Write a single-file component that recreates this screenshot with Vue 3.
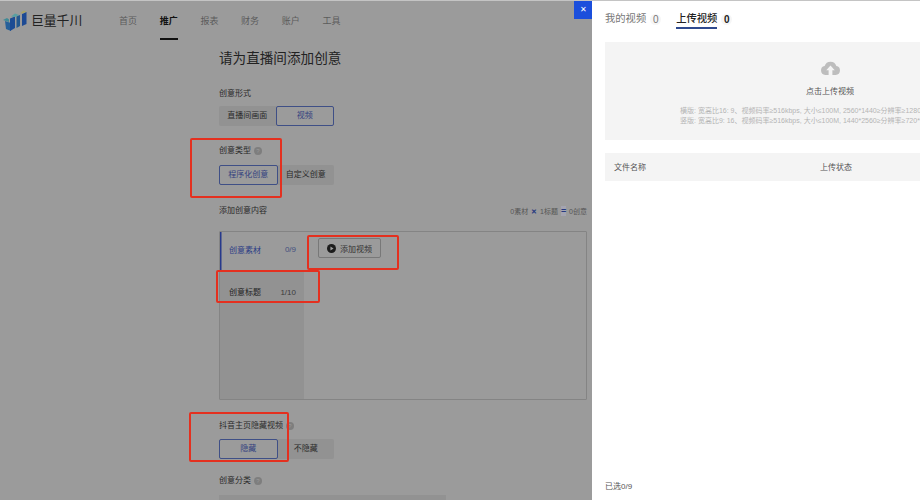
<template>
  <div class="page">
    <!-- dimmed page behind the drawer -->
    <div class="left">
      <header class="topbar">
        <div class="logo">
          <svg width="24" height="22" viewBox="0 0 24 22">
            <path d="M0 10 L4 8 L6 9.500 L6 12 Z" fill="#3f8a96" />
            <path d="M2 11 L8 13 L8 21 L3 19 Z" fill="#26609a" />
            <path d="M7 8.500 L12 6.500 L12 18 L7 21 Z" fill="#1d4c94" />
            <path d="M8 6.500 L12 3.500 L16 5 L12 7 Z" fill="#58a0a2" />
            <path d="M13.500 6.500 L17 5 L17 16 L13.500 18 Z" fill="#24588f" />
            <path d="M19 4 L23.500 2 L23.500 14 L19 16 Z" fill="#1d4a94" />
            <path d="M17.500 3 L20.500 0.500 L23.500 1.500 L20 3.500 Z" fill="#a8a466" />
          </svg>
          <span class="logo-name">巨量千川</span>
        </div>
        <nav class="nav">
          <a v-for="n in navs" :key="n" :class="['nav-item', { active: n === '推广' }]">{{ n }}</a>
        </nav>
      </header>

      <main class="form">
        <h2 class="title">请为直播间添加创意</h2>

        <div class="label first">创意形式</div>
        <div class="seg close-up">
          <span class="opt">直播间画面</span>
          <span class="opt on">视频</span>
        </div>

        <div class="label gap-a">创意类型 <i class="help">?</i></div>
        <div class="seg roomy">
          <span class="opt on">程序化创意</span>
          <span class="opt">自定义创意</span>
        </div>

        <div class="content-head">
          <span class="label">添加创意内容</span>
          <span class="formula">0素材 <b>✕</b> 1标题 <b class="eq">=</b> 0创意</span>
        </div>

        <div class="content-box">
          <div class="side">
            <div class="side-row current">
              <span>创意素材</span><em>0/9</em>
            </div>
            <div class="side-row second">
              <span>创意标题</span><em>1/10</em>
            </div>
          </div>
          <div class="main-col">
            <button class="add-btn">
              <svg width="9" height="9" viewBox="0 0 10 10">
                <circle cx="5" cy="5" r="5" fill="#1c1c1c" />
                <path d="M3.800 2.800 L7.300 5 L3.800 7.200 Z" fill="#a0a0a0" />
              </svg>
              添加视频
            </button>
          </div>
        </div>

        <div class="label gap-b">抖音主页隐藏视频 <i class="help">?</i></div>
        <div class="seg">
          <span class="opt on">隐藏</span>
          <span class="opt">不隐藏</span>
        </div>

        <div class="label gap-c">创意分类 <i class="help">?</i></div>
        <div class="cat-input"></div>
      </main>

      <!-- red annotation frames -->
      <div class="mark m1"></div>
      <div class="mark m2"></div>
      <div class="mark m3"></div>
      <div class="mark m4"></div>

      <button class="close">✕</button>
    </div>

    <aside class="drawer">
      <div class="tabs">
        <span class="tab">我的视频</span>
        <span class="count">0</span>
        <span class="tab current">上传视频</span>
        <span class="count strong">0</span>
      </div>

      <div class="upload">
        <svg width="21" height="16" viewBox="0 0 21 17">
          <path d="M5 17 A4.800 4.800 0 0 1 4.300 7.500 A6.500 6.500 0 0 1 16.700 7.500 A4.800 4.800 0 0 1 16 17 L12.500 17 L12.500 12 L15 12 L10.500 7 L6 12 L8.500 12 L8.500 17 Z" fill="#bdbdbd" />
        </svg>
        <div class="upload-text">点击上传视频</div>
        <div class="upload-hint">
          <p>横版: 宽高比16: 9、视频码率≥516kbps, 大小≤100M, 2560*1440≥分辨率≥1280*720</p>
          <p>竖版: 宽高比9: 16、视频码率≥516kbps, 大小≤100M, 1440*2560≥分辨率≥720*1280</p>
        </div>
      </div>

      <div class="file-head">
        <span>文件名称</span>
        <span>上传状态</span>
      </div>

      <div class="spacer"></div>
      <div class="foot">已选0/9</div>
    </aside>
  </div>
</template>

<script setup>
const navs = ['首页', '推广', '报表', '财务', '账户', '工具']
</script>

<style>
html, body { margin: 0; padding: 0; background: #fff; }
</style>

<style scoped>
.page { width: 920px; height: 500px; display: flex; overflow: hidden; font-family: "Liberation Sans", "Noto Sans CJK SC", sans-serif; border-top: 1px solid #c4c4c4; box-sizing: border-box; }

.left { position: relative; flex: 0 0 592px; height: 100%; background: #9b9b9b; overflow: hidden; color: #1e1e1e; }

.topbar { display: flex; align-items: flex-start; height: 39px; }
.logo { display: flex; align-items: center; gap: 4px; margin-left: 3px; margin-top: 9px; width: 116px; }
.logo-name { font-size: 12.800px; line-height: 22px; color: #222; }
.nav { display: flex; gap: 22.700px; margin-top: 13px; }
.nav-item { position: relative; font-size: 9px; line-height: 15px; color: #5c5c5c; }
.nav-item.active { color: #111; font-weight: 700; }
.nav-item.active::after { content: ''; position: absolute; left: 0; right: 0; top: 24px; height: 1.500px; background: #111; }

.form { padding-left: 219px; width: 368px; }
.title { margin: 8px 0 0; font-size: 13.600px; line-height: 22px; font-weight: 400; color: #222; }
.label { font-size: 8px; line-height: 12px; color: #2a2a2a; display: flex; align-items: center; gap: 3px; }
.label.first { margin-top: 18px; }
.label.gap-a { margin-top: 19px; }
.label.gap-b { margin-top: 20px; }
.label.gap-c { margin-top: 16px; }
.help { width: 8px; height: 8px; border-radius: 50%; background: #7e7e7e; color: #9b9b9b; font-size: 6px; line-height: 8px; text-align: center; font-style: normal; }

.seg { display: flex; margin-top: 7px; width: 115px; height: 20px; background: #929292; border-radius: 2px; }
.seg.close-up { margin-top: 6px; }
.seg.roomy { margin-top: 8px; }
.opt { flex: 1; box-sizing: border-box; font-size: 8px; line-height: 20px; text-align: center; color: #2a2a2a; }
.opt.on { background: #9b9b9b; border: 1px solid #3f4f86; border-radius: 2px; color: #33427f; line-height: 18px; }

.content-head { display: flex; justify-content: space-between; align-items: center; margin-top: 20px; }
.formula { font-size: 7px; color: #555; }
.formula b { margin: 0 1px; color: #263a80; font-weight: 700; }
.formula .eq { font-size: 9px; line-height: 8px; background: #a4a4b0; }

.content-box { display: flex; height: 169px; margin-top: 14px; box-sizing: border-box; border: 1px solid #848484; border-radius: 1px; }
.side { width: 84px; background: #929292; }
.side-row { display: flex; justify-content: space-between; align-items: center; padding: 0 8px 0 9px; font-size: 8px; color: #222; }
.side-row em { font-style: normal; color: #3c3c3c; }
.side-row.current { height: 38px; box-sizing: border-box; padding-bottom: 3px; background: #9b9b9b; color: #2d3e86; box-shadow: inset 1.500px 0 0 #27398c; }
.side-row.current em { color: #44507f; }
.side-row.second { height: 28px; align-items: flex-end; box-sizing: border-box; padding-bottom: 1px; }
.main-col { flex: 1; padding: 6px 0 0 14px; }
.add-btn { display: flex; align-items: center; justify-content: center; gap: 4px; width: 63px; height: 20px; padding: 0; background: #9b9b9b; border: 1px solid #787878; border-radius: 2px; font-family: inherit; font-size: 8px; color: #333; }

.cat-input { margin-top: 8px; width: 227px; height: 20px; background: #929292; }

.mark { position: absolute; box-sizing: border-box; border: 2px solid #e4301f; border-radius: 2px; }
.m1 { left: 190px; top: 137px; width: 92px; height: 60px; }
.m2 { left: 307px; top: 234px; width: 92px; height: 35px; }
.m3 { left: 216px; top: 269px; width: 104px; height: 33px; }
.m4 { left: 189px; top: 411px; width: 100px; height: 50px; }

.close { position: absolute; right: 0; top: 0; width: 18px; height: 18px; padding: 0; border: none; background: #1b4fdc; color: #fff; font-size: 8px; line-height: 18px; text-align: center; }

.drawer { flex: 0 0 478px; height: 100%; box-sizing: border-box; padding: 0 0 0 13px; background: #fff; display: flex; flex-direction: column; color: #333; }

.tabs { display: flex; align-items: center; height: 36px; }
.tab { font-size: 10.300px; line-height: 14px; color: #777; }
.tab.current { position: relative; font-weight: 500; color: #222; }
.tab.current::after { content: ''; position: absolute; left: 0; right: 0; top: 15px; height: 1.500px; background: #2f4a8e; }
.count { margin: 0 15px 0 4px; width: 11px; height: 11px; font-size: 10px; line-height: 11px; text-align: center; color: #777; background: #f6f6f6; border-radius: 50%; }
.count.strong { font-weight: 700; color: #222; }

.upload { margin-top: 5px; width: 450px; height: 98px; box-sizing: border-box; padding-top: 17px; background: #f4f4f4; display: flex; flex-direction: column; align-items: center; }
.upload-text { margin-top: 11px; font-size: 8px; line-height: 12px; color: #555; }
.upload-hint { margin-top: 8px; width: 300px; font-size: 7px; line-height: 10px; color: #b4b4b4; white-space: nowrap; }
.upload-hint p { margin: 0; }

.file-head { display: grid; grid-template-columns: 206px 1fr; margin-top: 13px; width: 450px; height: 28px; box-sizing: border-box; padding-left: 9px; background: #f4f4f4; font-size: 8px; line-height: 29px; color: #555; }

.spacer { flex: 1; }
.foot { padding-bottom: 7px; font-size: 8px; line-height: 12px; color: #555; }
</style>
